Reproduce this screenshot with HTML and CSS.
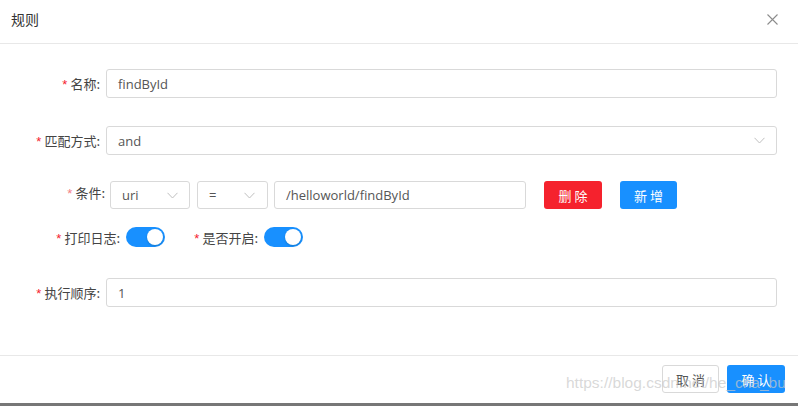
FILE: index.html
```html
<!DOCTYPE html>
<html lang="zh">
<head>
<meta charset="utf-8">
<link rel="stylesheet" href="styles.css">
</head>
<body>
<div class="modal">
  <div class="header">
    <span class="title">规则</span>
    <svg class="close" width="11" height="11" viewBox="0 0 11 11"><path d="M0.5 0.5L10.5 10.5M10.5 0.5L0.5 10.5" stroke="#8c8c8c" stroke-width="1.1" fill="none"/></svg>
  </div>
  <div class="body">
    <div class="row r1">
      <label class="lbl"><span class="req">*</span>名称:</label>
      <div class="input">findById</div>
    </div>
    <div class="row r2">
      <label class="lbl"><span class="req">*</span>匹配方式:</label>
      <div class="input select">and<svg class="chev" width="11" height="7" viewBox="0 0 11 7"><path d="M0.5 0.8L5.5 6L10.5 0.8" stroke="#bfbfbf" stroke-width="1" fill="none"/></svg></div>
    </div>
    <div class="row r3">
      <label class="lbl lbl3"><span class="req light">*</span>条件:</label>
      <div class="input select s-uri">uri<svg class="chev" width="11" height="7" viewBox="0 0 11 7"><path d="M0.5 0.8L5.5 6L10.5 0.8" stroke="#bfbfbf" stroke-width="1" fill="none"/></svg></div>
      <div class="input select s-eq">=<svg class="chev" width="11" height="7" viewBox="0 0 11 7"><path d="M0.5 0.8L5.5 6L10.5 0.8" stroke="#bfbfbf" stroke-width="1" fill="none"/></svg></div>
      <div class="input s-path">/helloworld/findById</div>
      <button class="btn danger">删 除</button>
      <button class="btn primary add">新 增</button>
    </div>
    <div class="row r4">
      <label class="lbl lbl4"><span class="req">*</span>打印日志:</label>
      <span class="switch"><span class="knob"></span></span>
      <label class="lbl lbl4b"><span class="req">*</span>是否开启:</label>
      <span class="switch"><span class="knob"></span></span>
    </div>
    <div class="row r5">
      <label class="lbl"><span class="req">*</span>执行顺序:</label>
      <div class="input">1</div>
    </div>
  </div>
  <div class="footer">
    <button class="btn default">取 消</button>
    <button class="btn primary ok">确 认</button>
    <span class="watermark">https://blog.csdn.net/he_cha_bu</span>
  </div>
  <div class="bar"></div>
</div>
</body>
</html>
```
FILE: styles.css
```css
* { box-sizing: border-box; }
html, body { margin: 0; padding: 0; background: #fff; }
body {
  width: 798px; height: 406px; overflow: hidden;
  font-family: "Noto Sans", "Noto Sans CJK SC", sans-serif;
  font-size: 13px; color: rgba(0,0,0,.65);
}
.modal { width: 798px; height: 406px; display: flex; flex-direction: column; position: relative; }
.header {
  height: 44px; border-bottom: 1px solid #e8e8e8;
  display: flex; align-items: center; justify-content: space-between;
  padding: 0 20px 0 11px;
}
.title { font-size: 14px; color: #333; line-height: 20px; margin-top: -5px; font-family: "Noto Sans CJK SC", sans-serif; }
.close { margin-top: -4px; }
.body { flex: 1; display: flex; flex-direction: column; padding-right: 21px; }
.row { display: flex; align-items: center; }
.lbl {
  width: 106px; padding-right: 6px; text-align: right; flex: none;
  font-family: "Noto Sans CJK SC", sans-serif; font-size: 13px; color: #444;
  white-space: nowrap;
}
.req { color: #f5222d; margin-right: 3px; font-family: "Liberation Sans", sans-serif; font-size: 13px; }
.req.light { color: #f37e86; }
.input {
  flex: 1; height: 29px; border: 1px solid #d9d9d9; border-radius: 3px;
  display: flex; align-items: center; padding: 0 11px;
  font-family: "Open Sans", "Noto Sans", sans-serif; font-size: 13px; color: #555;
  position: relative;
}
.select { justify-content: space-between; }
.chev { flex: none; }
.r1 { margin-top: 25px; }
.r2 { margin-top: 28px; }
.r3 { margin-top: 26px; }
.r3 .input { flex: none; height: 28px; }
.lbl3 { width: 110px; padding-right: 5px; align-self: flex-start; margin-top: 2px; }
.s-uri { width: 80px; }
.s-eq { width: 71px; margin-left: 7px; padding-right: 12px; }
.s-path { width: 252px; margin-left: 6px; }
.btn {
  height: 28px; border-radius: 3px; border: 1px solid transparent;
  font-family: "Noto Sans CJK SC", sans-serif; font-size: 13px; padding: 0; cursor: pointer;
}
.danger { background: #f5222d; color: #fff; width: 58px; margin-left: 18px; }
.primary { background: #1890ff; color: #fff; }
.add { width: 57px; margin-left: 18px; }
.r4 { margin-top: 18px; }
.lbl4 { width: 126px; padding-right: 6px; }
.lbl4b { width: 99px; padding-right: 6px; }
.switch {
  width: 39px; height: 20px; border-radius: 10px; background: #1890ff;
  position: relative; flex: none;
}
.knob {
  position: absolute; right: 2px; top: 2px; width: 16px; height: 16px;
  border-radius: 50%; background: #fff; box-shadow: 0 1px 2px rgba(0,35,11,.2);
}
.r5 { margin-top: 31px; }
.footer {
  height: 48px; border-top: 1px solid #e8e8e8; margin-bottom: 0;
  display: flex; justify-content: flex-end; align-items: flex-start;
  padding: 9px 13px 0 0; position: relative;
}
.default { width: 57px; background: #fff; border-color: #d9d9d9; color: #555; }
.ok { width: 58px; margin-left: 8px; }
.watermark {
  position: absolute; left: 566px; top: 18px;
  font-family: "Liberation Sans", sans-serif; font-size: 15.5px; color: rgba(200,200,200,.7);
  white-space: nowrap; pointer-events: none;
}
.bar { height: 3px; background: #777; margin-top: auto; }
```
